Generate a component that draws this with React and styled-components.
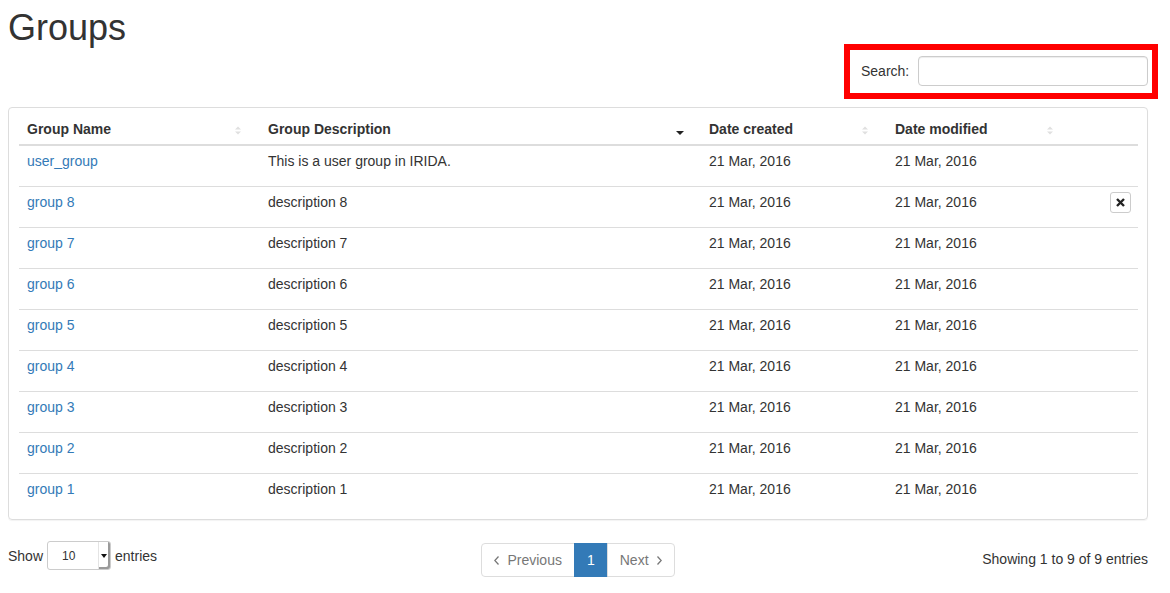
import React from "react";
import styled, { createGlobalStyle } from "styled-components";

const Global = createGlobalStyle`
  html, body { margin: 0; padding: 0; background: #fff; }
  body {
    margin: 8px;
    font-family: "Liberation Sans", Arial, sans-serif;
    font-size: 14px;
    line-height: 20px;
    color: #333;
  }
  * { box-sizing: border-box; }
`;

const Page = styled.div`
  width: 1140px;
  display: flex;
  flex-direction: column;
`;

const Title = styled.h1`
  margin: 0;
  font-size: 36px;
  font-weight: 500;
  line-height: 40px;
  color: #333;
`;

const SearchRow = styled.div`
  display: flex;
  justify-content: flex-end;
  margin-top: -4px;
  margin-right: -10px;
`;

const SearchBox = styled.label`
  display: flex;
  align-items: center;
  gap: 9px;
  border: 6px solid #ff0000;
  padding: 0 4px 1px 11px;
  height: 55px;
  width: 314px;
`;

const SearchInput = styled.input`
  width: 230px;
  height: 30px;
  border: 1px solid #ccc;
  border-radius: 4px;
  box-shadow: inset 0 1px 1px rgba(0, 0, 0, 0.075);
  padding: 4px 8px;
  font: inherit;
  outline: none;
`;

const Panel = styled.div`
  margin-top: 8px;
  border: 1px solid #ddd;
  border-radius: 4px;
  padding: 4px 9px 5px 10px;
  box-shadow: 0 1px 1px rgba(0, 0, 0, 0.05);
`;

const Table = styled.table`
  width: 1119px;
  border-collapse: separate;
  border-spacing: 0;
  table-layout: fixed;
`;

const Th = styled.th`
  width: ${(p) => p.$w}px;
  text-align: left;
  font-weight: bold;
  padding: 7px 8px 5px;
  border-bottom: 2px solid #ddd;
  vertical-align: bottom;
`;

const ThInner = styled.div`
  display: flex;
  align-items: center;
  justify-content: space-between;
  padding-right: 11px;
  height: 20px;
`;

const Td = styled.td`
  padding: 5px 8px 15px;
  vertical-align: top;
  border-top: ${(p) => (p.$first ? "none" : "1px solid #ddd")};
  text-align: ${(p) => (p.$right ? "right" : "left")};
  padding-right: ${(p) => (p.$right ? "7px" : "8px")};
`;

const Link = styled.a`
  color: #337ab7;
  text-decoration: none;
`;

const IconButton = styled.button`
  width: 21px;
  height: 21px;
  padding: 0;
  margin-bottom: -1px;
  border: 1px solid #ccc;
  border-radius: 3px;
  background: #fff;
  display: inline-flex;
  align-items: center;
  justify-content: center;
  vertical-align: top;
`;

const Footer = styled.div`
  display: grid;
  grid-template-columns: 1fr auto 1fr;
  margin-top: 23px;
`;

const Length = styled.div`
  display: flex;
  align-items: center;
  gap: 4px;
  margin-top: -2px;
  height: 29px;
`;

const Select = styled.div`
  position: relative;
  width: 64px;
  height: 29px;
  border: 1px solid #ccc;
  border-radius: 3px;
  font-size: 12px;
  display: flex;
  align-items: center;
  padding-left: 14px;
`;

const SelectArrow = styled.div`
  position: absolute;
  right: 0;
  top: 0;
  bottom: 0;
  width: 12px;
  border-left: 1px solid #e4e4e4;
  box-shadow: inset -2px -2px 0 #9a9a9a;
  border-radius: 0 2px 2px 0;
  display: flex;
  align-items: center;
  justify-content: center;
  padding-right: 2px;
`;

const Pager = styled.div`
  display: flex;
  height: 34px;
`;

const PageBtn = styled.span`
  display: flex;
  align-items: center;
  gap: 8px;
  height: 34px;
  padding: 0 ${(p) => p.$px}px;
  border: 1px solid ${(p) => (p.$active ? "#337ab7" : "#ddd")};
  background: ${(p) => (p.$active ? "#337ab7" : "#fff")};
  color: ${(p) => (p.$active ? "#fff" : "#777")};
  margin-left: ${(p) => (p.$first ? "0" : "-1px")};
  border-radius: ${(p) => p.$radius || "0"};
`;

const Info = styled.div`
  text-align: right;
  padding-top: 6px;
`;

const SortBoth = () => (
  <svg width="6" height="9" viewBox="0 0 6 9" style={{ marginTop: 3 }}>
    <path d="M0 3.5 L3 0.5 L6 3.5Z" fill="#e0e0e0" />
    <path d="M0 5.5 L3 8.5 L6 5.5Z" fill="#e0e0e0" />
  </svg>
);

const SortDesc = () => (
  <svg width="8" height="4" viewBox="0 0 8 4" style={{ marginTop: 8, marginRight: -2 }}>
    <path d="M0 0 L8 0 L4 4Z" fill="#222" />
  </svg>
);

const Chevron = ({ dir }) => (
  <svg width="5" height="9" viewBox="0 0 5 9">
    <polyline
      points={dir === "left" ? "4.5,0.5 0.8,4.5 4.5,8.5" : "0.5,0.5 4.2,4.5 0.5,8.5"}
      fill="none"
      stroke="#777"
      strokeWidth="1.3"
    />
  </svg>
);

const XIcon = () => (
  <svg width="9" height="9" viewBox="0 0 9 9">
    <path d="M1 1 L8 8 M8 1 L1 8" stroke="#222" strokeWidth="2.4" />
  </svg>
);

const rows = [
  { name: "user_group", desc: "This is a user group in IRIDA." },
  ...[8, 7, 6, 5, 4, 3, 2, 1].map((n) => ({ name: `group ${n}`, desc: `description ${n}` })),
];

export default function App() {
  return (
    <>
      <Global />
      <Page>
        <Title>Groups</Title>
        <SearchRow>
          <SearchBox>
            Search:
            <SearchInput type="search" />
          </SearchBox>
        </SearchRow>
        <Panel>
          <Table>
            <thead>
              <tr>
                <Th $w={241}><ThInner>Group Name<SortBoth /></ThInner></Th>
                <Th $w={441}><ThInner>Group Description<SortDesc /></ThInner></Th>
                <Th $w={186}><ThInner>Date created<SortBoth /></ThInner></Th>
                <Th $w={185}><ThInner>Date modified<SortBoth /></ThInner></Th>
                <Th $w={66}></Th>
              </tr>
            </thead>
            <tbody>
              {rows.map((r, i) => {
                const first = i === 0;
                return (
                  <tr key={r.name}>
                    <Td $first={first}><Link href="#">{r.name}</Link></Td>
                    <Td $first={first}>{r.desc}</Td>
                    <Td $first={first}>21 Mar, 2016</Td>
                    <Td $first={first}>21 Mar, 2016</Td>
                    <Td $first={first} $right>
                      {r.name === "group 8" && (
                        <IconButton><XIcon /></IconButton>
                      )}
                    </Td>
                  </tr>
                );
              })}
            </tbody>
          </Table>
        </Panel>
        <Footer>
          <Length>
            Show
            <Select>
              10
              <SelectArrow>
                <svg width="6" height="4" viewBox="0 0 6 4"><path d="M0 0 L6 0 L3 4Z" fill="#111" /></svg>
              </SelectArrow>
            </Select>
            entries
          </Length>
          <Pager>
            <PageBtn $first $px={12} $radius="4px 0 0 4px"><Chevron dir="left" />Previous</PageBtn>
            <PageBtn $active $px={12}>1</PageBtn>
            <PageBtn $px={12} $radius="0 4px 4px 0">Next<Chevron dir="right" /></PageBtn>
          </Pager>
          <Info>Showing 1 to 9 of 9 entries</Info>
        </Footer>
      </Page>
    </>
  );
}
